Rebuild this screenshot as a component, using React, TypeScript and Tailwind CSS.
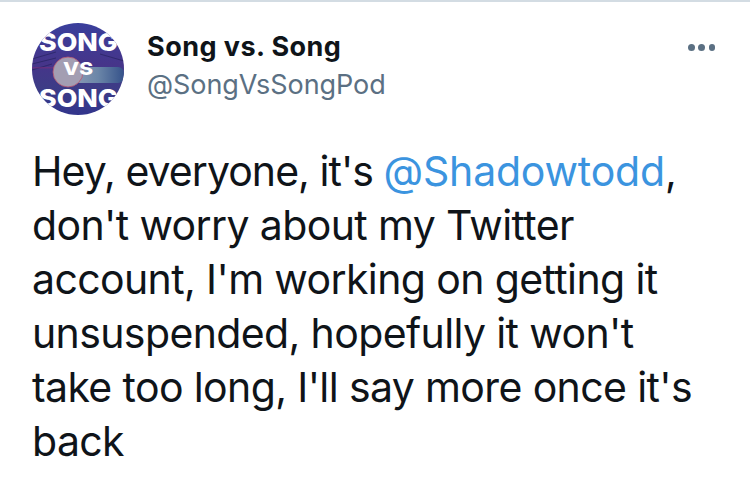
export default function App() {
  const song = { fill: "#fff", fontSize: 25, fontWeight: 800, fontFamily: "Inter, sans-serif" };
  return (
    <div className="w-[750px] h-[480px] overflow-hidden bg-white border-t-2 border-[#d3dce3] font-['Inter','Liberation_Sans',sans-serif]">
      <div className="flex items-start pl-8 pr-[35px] pt-[21px]">
        <div className="w-[92px] h-[92px] shrink-0">
          <svg viewBox="0 0 92 92" width="92" height="92">
            <defs>
              <clipPath id="c"><circle cx="46" cy="46" r="46" /></clipPath>
              <linearGradient id="bg" x1="0" y1="0" x2="0" y2="1">
                <stop offset="0" stopColor="#3a3f9c" />
                <stop offset="0.45" stopColor="#46358a" />
                <stop offset="0.7" stopColor="#3d3c86" />
                <stop offset="1" stopColor="#32358c" />
              </linearGradient>
              <linearGradient id="mic" x1="0" y1="0" x2="1" y2="0">
                <stop offset="0" stopColor="#8e9cb6" />
                <stop offset="0.5" stopColor="#6b86a8" />
                <stop offset="1" stopColor="#35528a" />
              </linearGradient>
            </defs>
            <g clipPath="url(#c)">
              <rect width="92" height="92" fill="url(#bg)" />
              <path d="M0 36 L24 29 M0 41 L24 35 M0 47 L20 41 M68 31 L92 38" stroke="#1f1c55" strokeWidth="0.8" opacity="0.7" fill="none" />
              <rect x="0" y="44" width="22" height="1.5" fill="#7a2f7c" opacity="0.6" />
              <rect x="40" y="44" width="52" height="16" rx="6" fill="url(#mic)" />
              <circle cx="36" cy="49" r="15" fill="#a39eb2" stroke="#b9566f" strokeWidth="0.8" />
              <text x="7" y="28" textLength="79" lengthAdjust="spacingAndGlyphs" {...song}>SONG</text>
              <text x="31" y="52" textLength="30" lengthAdjust="spacingAndGlyphs" fill="#fff" fontSize="18" fontWeight="800" fontFamily="Inter, sans-serif">VS</text>
              <text x="7" y="84" textLength="79" lengthAdjust="spacingAndGlyphs" {...song}>SONG</text>
            </g>
          </svg>
        </div>
        <div className="ml-[23px] flex-1 pt-[5px]">
          <div className="text-[27px] leading-[38px] font-bold text-[#0f1419] tracking-[0.45px]">Song vs. Song</div>
          <div className="text-[27px] leading-[38px] text-[#5b7083] tracking-[-0.07px]">@SongVsSongPod</div>
        </div>
        <div className="flex gap-[3.75px] pt-[21px]">
          <span className="w-[6.5px] h-[6.5px] rounded-full bg-[#5b7083]" />
          <span className="w-[6.5px] h-[6.5px] rounded-full bg-[#5b7083]" />
          <span className="w-[6.5px] h-[6.5px] rounded-full bg-[#5b7083]" />
        </div>
      </div>
      <div className="pl-8 pt-[29px] w-[720px] text-[41px] leading-[54px] tracking-[-0.62px] text-[#0f1419]">
        <div><span className="tracking-[-0.95px]">Hey, everyone, it's </span><span className="text-[#3b94df] tracking-[-0.2px]">@Shadowtodd</span>,</div>
        <div>don't worry about my Twitter</div>
        <div>account, I'm working on getting it</div>
        <div>unsuspended, hopefully it won't</div>
        <div>take too long, I'll say more once it's</div>
        <div>back</div>
      </div>
    </div>
  );
}
